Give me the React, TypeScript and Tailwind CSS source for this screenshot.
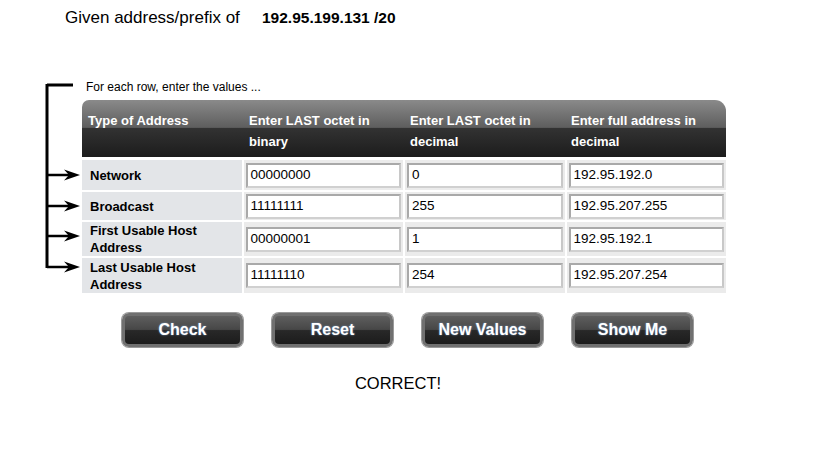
import React from 'react'

const rows = [
  { label: 'Network', h: 'h-[30px]', values: ['00000000', '0', '192.95.192.0'] },
  { label: 'Broadcast', h: 'h-[28px]', values: ['11111111', '255', '192.95.207.255'] },
  { label: 'First Usable Host Address', h: 'h-[34px]', values: ['00000001', '1', '192.95.192.1'] },
  { label: 'Last Usable Host Address', h: 'h-[35px]', values: ['11111110', '254', '192.95.207.254'] },
]

const headers = ['Type of Address', 'Enter LAST octet in binary', 'Enter LAST octet in decimal', 'Enter full address in decimal']

const arrowYs = [175, 206, 236, 267]

const Bracket = () => (
  <svg className="absolute left-0 top-0 pointer-events-none" width="90" height="280" viewBox="0 0 90 280">
    <path d="M47 85 H73 M47 84 V268" stroke="#000" strokeWidth="3" fill="none" />
    {arrowYs.map((y) => (
      <g key={y}>
        <path d={`M47 ${y} H72`} stroke="#000" strokeWidth="2.5" />
        <path d={`M80 ${y} L64 ${y - 5.5} L69 ${y} L64 ${y + 5.5} Z`} fill="#000" />
      </g>
    ))}
  </svg>
)

const Btn = ({ children }: { children: React.ReactNode }) => (
  <button className="w-[121px] h-[34px] rounded-[7px] border-[3px] border-[#707070] bg-[linear-gradient(#5e5e5e_0%,#474747_48%,#282828_52%,#1c1c1c_100%)] text-white font-bold text-[16px] shadow-[0_0_0_1px_#9a9a9a] [text-shadow:0_0_2px_#7b9ec8]">
    {children}
  </button>
)

const App = () => {
  return (
    <div className="relative w-[819px] h-[460px] pt-[8px] bg-white font-['Liberation_Sans',Arial,sans-serif] text-black">
      <Bracket />
      {/* title */}
      <div className="flex items-center h-[20px] pl-[65px]">
        <span className="text-[17px] w-[197px]">Given address/prefix of</span>
        <span className="text-[15.5px] font-bold">192.95.199.131 /20</span>
      </div>

      <div className="pl-[86px] mt-[52px] text-[12px] leading-[14px]">For each row, enter the values ...</div>

      {/* table */}
      <div className="ml-[82px] mt-[6px] w-[644px]">
        <div className="grid grid-cols-4 h-[57px] rounded-tl-[7px] rounded-tr-[11px] bg-[linear-gradient(#8a8a8a_0%,#5e5e5e_48%,#323232_50%,#1c1c1c_100%)] text-white font-bold text-[13px] leading-[21px]">
          {headers.map((t) => (
            <div key={t} className="pl-[6px] pt-[10px] pr-[30px]">{t}</div>
          ))}
        </div>
        <div className="flex flex-col gap-[2px] pt-[3px]">
          {rows.map((r) => (
            <div key={r.label} className={`grid grid-cols-4 gap-[2px] ${r.h}`}>
              <div className="bg-[#e3e5e8] flex items-center pl-[8px] pr-[40px] font-bold text-[13px] leading-[17px]">{r.label}</div>
              {r.values.map((v) => (
                <div key={v} className="bg-[#ebebeb] flex items-center px-[2px]">
                  <div className="w-full h-[25px] bg-white border-2 border-t-[#a9a9a9] border-l-[#a9a9a9] border-r-[#c8c8c8] border-b-[#d0d0d0] flex items-center pl-[3px] text-[13.5px]">
                    {v}
                  </div>
                </div>
              ))}
            </div>
          ))}
        </div>
      </div>

      {/* buttons */}
      <div className="flex gap-[29px] ml-[122px] mt-[20px]">
        <Btn>Check</Btn>
        <Btn>Reset</Btn>
        <Btn>New Values</Btn>
        <Btn>Show Me</Btn>
      </div>

      <div className="w-[796px] text-center mt-[24px] text-[16.5px]">CORRECT!</div>
    </div>
  )
}

export default App
